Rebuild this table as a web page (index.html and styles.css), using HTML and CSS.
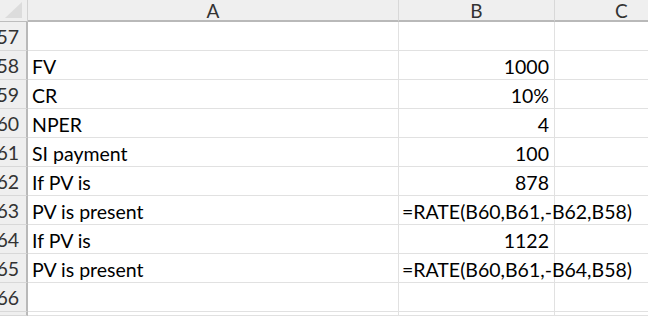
FILE: index.html
```html
<!DOCTYPE html>
<html>
<head>
<meta charset="utf-8">
<link rel="stylesheet" href="styles.css">
</head>
<body>
<div class="sheet">
  <div class="corner"><svg class="tri" width="20" height="18" viewBox="0 0 20 18"><polygon points="19,1 19,17 2,17" fill="#dcdcdc"/></svg></div>
  <div class="colhead">A</div>
  <div class="colhead">B</div>
  <div class="colhead last">C</div>

  <div class="rowhead"><span>57</span></div><div class="cell"></div><div class="cell num"></div><div class="cell last"></div>
  <div class="rowhead"><span>58</span></div><div class="cell">FV</div><div class="cell num">1000</div><div class="cell last"></div>
  <div class="rowhead"><span>59</span></div><div class="cell">CR</div><div class="cell num">10%</div><div class="cell last"></div>
  <div class="rowhead"><span>60</span></div><div class="cell">NPER</div><div class="cell num">4</div><div class="cell last"></div>
  <div class="rowhead"><span>61</span></div><div class="cell">SI payment</div><div class="cell num">100</div><div class="cell last"></div>
  <div class="rowhead"><span>62</span></div><div class="cell">If PV is</div><div class="cell num">878</div><div class="cell last"></div>
  <div class="rowhead"><span>63</span></div><div class="cell">PV is present</div><div class="cell formula">=RATE(B60,B61,-B62,B58)</div><div class="cell last"></div>
  <div class="rowhead"><span>64</span></div><div class="cell">If PV is</div><div class="cell num">1122</div><div class="cell last"></div>
  <div class="rowhead"><span>65</span></div><div class="cell">PV is present</div><div class="cell formula">=RATE(B60,B61,-B64,B58)</div><div class="cell last"></div>
  <div class="rowhead"><span>66</span></div><div class="cell"></div><div class="cell num"></div><div class="cell last"></div>
  <div class="rowhead"></div><div class="cell"></div><div class="cell num"></div><div class="cell last"></div>
</div>
</body>
</html>
```
FILE: styles.css
```css
html, body {
  margin: 0;
  padding: 0;
  background: #ffffff;
  overflow: hidden;
}
body {
  font-family: Lato, "Open Sans", sans-serif;
  font-size: 19.5px;
  color: #000;
}
.sheet {
  display: grid;
  grid-template-columns: 28px 371px 156px 93px;
  grid-template-rows: 22px repeat(10, 29px) 4px;
  width: 648px;
  height: 316px;
  overflow: hidden;
}
.corner {
  background: #efefef;
  border-right: 1px solid #d2d2d2;
  border-bottom: 1px solid #bdbdbd;
  box-sizing: border-box;
  display: flex;
  justify-content: flex-end;
  align-items: flex-end;
}
.tri { display: block; margin: 0 4px 2px 0; }
.colhead {
  background: #efefef;
  border-right: 1px solid #d8d8d8;
  border-bottom: 2px solid #b9b9b9;
  box-sizing: border-box;
  display: flex;
  justify-content: center;
  align-items: center;
  color: #333;
  font-size: 19px;
  line-height: 1;
  padding-top: 1px;
}
.colhead.last { border-right: none; justify-content: flex-start; padding-left: 60px; }
.rowhead {
  background: #efefef;
  border-right: 2px solid #b9b9b9;
  border-bottom: 1px solid #d8d8d8;
  box-sizing: border-box;
  display: flex;
  justify-content: flex-end;
  align-items: center;
  overflow: hidden;
  color: #333;
  padding-right: 7px;
  white-space: nowrap;
}
.cell {
  border-right: 1px solid #e1e1e1;
  border-bottom: 1px solid #e1e1e1;
  box-sizing: border-box;
  display: flex;
  align-items: center;
  padding: 2px 4px 0 4px;
  white-space: nowrap;
  overflow: visible;
}
.cell.last { border-right: none; }
.cell.num { justify-content: flex-end; padding-right: 5px; }
.cell.formula { justify-content: flex-start; padding-left: 3px; position: relative; z-index: 1; }
```
